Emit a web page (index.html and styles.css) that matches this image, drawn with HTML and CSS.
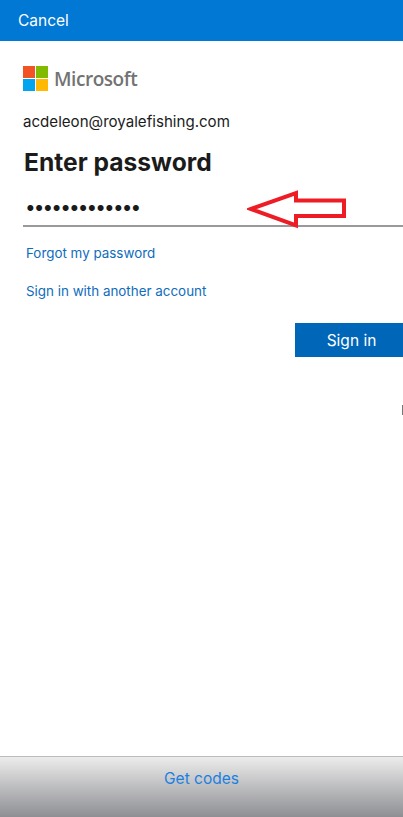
FILE: index.html
```html
<!DOCTYPE html>
<html lang="en">
<head>
    <meta charset="UTF-8">
    <meta name="viewport" content="width=device-width, initial-scale=1.0">
    <title>Enter password</title>
    <link rel="stylesheet" href="styles.css">
</head>
<body>
    <div class="topbar">Cancel</div>

    <div class="content">
        <div class="logo">
            <svg class="logo-squares" width="25" height="25" viewBox="0 0 25 25">
                <rect x="0" y="0" width="12" height="12" fill="#f25325"/>
                <rect x="13" y="0" width="12" height="12" fill="#80ba01"/>
                <rect x="0" y="13" width="12" height="12" fill="#02a4ef"/>
                <rect x="13" y="13" width="12" height="12" fill="#ffb902"/>
            </svg>
            <span class="logo-text">Microsoft</span>
        </div>

        <div class="email">acdeleon@royalefishing.com</div>
        <h1>Enter password</h1>

        <div class="campo-senha">
            <span class="pontos">•••••••••••••</span>
            <!-- seta vermelha desenhada por cima do campo -->
            <svg class="seta" width="100" height="40" viewBox="0 0 100 40">
                <path d="M4 20 L49 4 L49 11.5 L97 11.5 L97 27 L49 27 L49 36.5 Z" fill="none" stroke="#ee1c25" stroke-width="4"/>
            </svg>
        </div>

        <a class="link link-forgot">Forgot my password</a>
        <a class="link link-other">Sign in with another account</a>

        <div class="acoes">
            <button class="btn-signin">Sign in</button>
        </div>
    </div>

    <div class="marca-borda"></div>
    <div class="rodape">Get codes</div>
</body>
</html>
```

FILE: styles.css
```css
html, body {
    height: 100%;
}
body {
    position: relative;
    margin: 0;
    display: flex;
    flex-direction: column;
    background-color: #fff;
    font-family: Inter, "Liberation Sans", sans-serif;
    color: #1b1b1b;
    overflow: hidden;
}
.topbar {
    height: 41px;
    padding-left: 18px;
    display: flex;
    align-items: center;
    background-color: #0078d4;
    color: #fff;
    font-size: 15.5px;
}
.content {
    flex: 1;
    padding: 25px 0 0 23px;
}
.logo {
    display: flex;
    align-items: center;
    gap: 6px;
    height: 25px;
}
.logo-squares {
    display: block;
}
.logo-text {
    font-family: "Open Sans", sans-serif;
    font-size: 19px;
    font-weight: 600;
    letter-spacing: -0.45px;
    color: #737373;
}
.email {
    margin-top: 21px;
    font-size: 15.1px;
    line-height: 20px;
}
h1 {
    margin: 15px 0 0 1px;
    font-size: 24.6px;
    line-height: 30px;
    font-weight: 700;
}
.campo-senha {
    position: relative;
    height: 43px;
    margin-top: 5px;
    border-bottom: 2px solid #999;
}
.pontos {
    display: block;
    padding-left: 2px;
    font-size: 19px;
    line-height: 52px;
    letter-spacing: -1.9px;
}
.seta {
    position: absolute;
    left: 224px;
    top: 7px;
}
.link {
    display: block;
    margin-left: 3px;
    color: #0f6cbd;
    font-size: 13.4px;
    line-height: 18px;
}
.link-forgot {
    margin-top: 17px;
}
.link-other {
    margin-top: 20px;
}
.acoes {
    display: flex;
    justify-content: flex-end;
    margin-top: 23px;
}
.btn-signin {
    width: 108px;
    height: 34px;
    padding-left: 11px;
    border: 0;
    background-color: #0067b8;
    color: #fff;
    font-family: inherit;
    font-size: 15.5px;
}
.marca-borda {
    position: absolute;
    right: 0;
    top: 405px;
    width: 1px;
    height: 10px;
    background-color: #777;
}
.rodape {
    height: 61px;
    display: flex;
    align-items: center;
    justify-content: center;
    padding-bottom: 18px;
    box-sizing: border-box;
    border-top: 1px solid #bbb;
    background: linear-gradient(#ececec, #8e8f93);
    color: #1a7fe0;
    font-size: 15.5px;
}
```
